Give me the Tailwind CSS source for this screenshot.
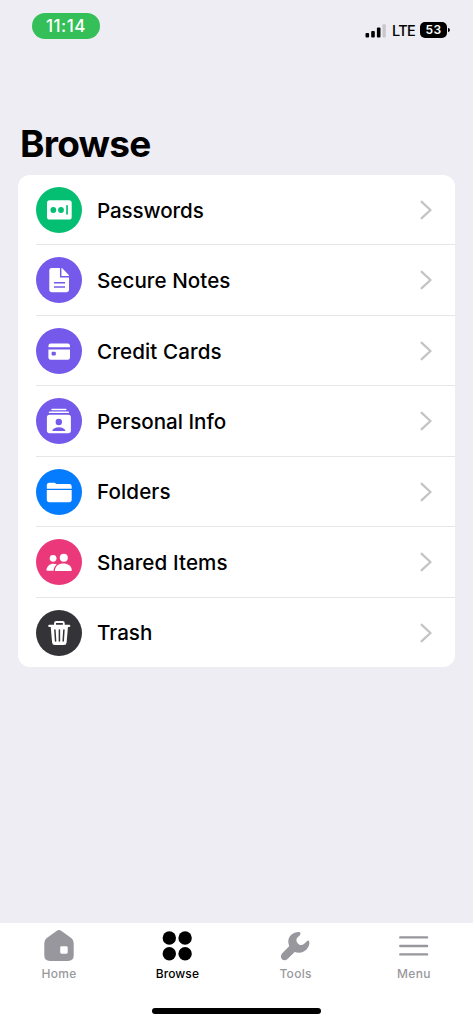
<!DOCTYPE html>
<html lang="en">
<head>
<meta charset="utf-8">
<title>Browse</title>
<script src="https://cdn.jsdelivr.net/npm/@tailwindcss/browser@4"></script>
</head>
<body class="w-[473px] h-[1024px] overflow-hidden bg-[#eeedf4] font-['Inter','Liberation_Sans',sans-serif] text-black flex flex-col">
<header class="h-[60px] shrink-0 flex items-start justify-between pl-8 pr-[22px] pt-[13px]">
  <div class="w-[68px] h-[26px] rounded-full bg-[#34bf58] text-white text-[17px] font-[450] flex items-center justify-center tracking-[0.5px] pt-px">11:14</div>
  <div class="flex items-center h-[18px] mt-2">
    <svg class="w-[21px] h-[15px]" viewBox="0 0 21 15"><rect x="0.5" y="10" width="3.6" height="4.5" rx="1"/><rect x="6.2" y="8" width="3.6" height="6.5" rx="1"/><rect x="11.9" y="4.6" width="3.6" height="9.9" rx="1"/><rect x="17.5" y="1.2" width="3.3" height="13.3" rx="1" fill="#c8c7cd"/></svg>
    <span class="ml-[6px] w-[22px] pt-px text-[14.5px] tracking-[-0.6px] font-medium whitespace-nowrap">LTE</span>
    <span class="ml-[6px] w-[27px] h-[16px] rounded-[5px] bg-black text-white text-[12px] font-semibold tracking-[0.4px] flex items-center justify-center">53</span>
    <svg class="w-[3px] h-[6px] ml-px" viewBox="0 0 3 6"><path d="M0 0.8Q2 1.5 2 3T0 5.2Z"/></svg>
  </div>
</header>
<main class="grow flex flex-col px-[18px]">
  <h1 class="h-[115px] pt-[61px] pl-[2px] text-[37px] leading-[46px] font-bold tracking-[-0.75px]">Browse</h1>
  <ul class="h-[492.4px] bg-white rounded-[12px] pl-[18px] flex flex-col text-[20.6px] font-[450]">
    <li class="flex-1 flex items-center border-b border-[#e6e6e8]">
      <svg class="w-[46px] h-[46px]" viewBox="0 0 46 46"><circle cx="23" cy="23" r="23" fill="#04bf72"/><rect x="11" y="13.2" width="24.7" height="19.4" rx="2.7" fill="#fff"/><g fill="#04bf72"><circle cx="17.3" cy="23" r="2.9"/><circle cx="25" cy="23" r="2.9"/><rect x="30.2" y="18.2" width="1.7" height="9.4"/></g></svg>
      <span class="ml-[15px] pt-[3px] grow tracking-[-0.1px]">Passwords</span>
      <svg class="w-[12px] h-[20px] mr-[23px]" viewBox="0 0 12 20" fill="none" stroke="#c4c4c7" stroke-width="2.3" stroke-linecap="round" stroke-linejoin="round"><path d="M1.7 1.8 10.5 10 1.7 18.2"/></svg>
    </li>
    <li class="flex-1 flex items-center border-b border-[#e6e6e8]">
      <svg class="w-[46px] h-[46px]" viewBox="0 0 46 46"><circle cx="23" cy="23" r="23" fill="#7559ea"/><path d="M15.7 11H26L33 18.3V32.6Q33 35.3 30.3 35.3H15.9Q13.3 35.3 13.3 32.6V13.4Q13.3 11 15.7 11Z" fill="#fff"/><path d="M24.7 10.5V19.7H33.8M18 25.8H29M18 29.9H29" fill="none" stroke="#7559ea" stroke-width="1.5"/></svg>
      <span class="ml-[15px] pt-[2px] grow tracking-[0.05px]">Secure Notes</span>
      <svg class="w-[12px] h-[20px] mr-[23px]" viewBox="0 0 12 20" fill="none" stroke="#c4c4c7" stroke-width="2.3" stroke-linecap="round" stroke-linejoin="round"><path d="M1.7 1.8 10.5 10 1.7 18.2"/></svg>
    </li>
    <li class="flex-1 flex items-center border-b border-[#e6e6e8]">
      <svg class="w-[46px] h-[46px]" viewBox="0 0 46 46"><circle cx="23" cy="23" r="23" fill="#7559ea"/><path d="M12.4 19.3V17.9Q12.4 15.6 14.7 15.6H31.7Q34 15.6 34 17.9V19.3ZM12.4 21.5H34V29.5Q34 31.7 31.7 31.7H14.7Q12.4 31.7 12.4 29.5Z" fill="#fff"/><rect x="15.6" y="23.7" width="4.2" height="3.8" rx="1" fill="#7559ea"/></svg>
      <span class="ml-[15px] pt-[3px] grow tracking-[0.12px]">Credit Cards</span>
      <svg class="w-[12px] h-[20px] mr-[23px]" viewBox="0 0 12 20" fill="none" stroke="#c4c4c7" stroke-width="2.3" stroke-linecap="round" stroke-linejoin="round"><path d="M1.7 1.8 10.5 10 1.7 18.2"/></svg>
    </li>
    <li class="flex-1 flex items-center border-b border-[#e6e6e8]">
      <svg class="w-[46px] h-[46px]" viewBox="0 0 46 46"><circle cx="23" cy="23" r="23" fill="#7559ea"/><path d="M16 11.4H29.8M13.5 14.3H32.3" stroke="#fff" stroke-width="1.5" stroke-linecap="round"/><rect x="10.9" y="16.8" width="24" height="18.4" rx="2.6" fill="#fff"/><circle cx="22.8" cy="24" r="3.2" fill="#7559ea"/><path d="M16.2 33Q17.5 29.3 22.8 29.3T29.5 33Z" fill="#7559ea"/></svg>
      <span class="ml-[15px] pt-[2px] grow">Personal Info</span>
      <svg class="w-[12px] h-[20px] mr-[23px]" viewBox="0 0 12 20" fill="none" stroke="#c4c4c7" stroke-width="2.3" stroke-linecap="round" stroke-linejoin="round"><path d="M1.7 1.8 10.5 10 1.7 18.2"/></svg>
    </li>
    <li class="flex-1 flex items-center border-b border-[#e6e6e8]">
      <svg class="w-[46px] h-[46px]" viewBox="0 0 46 46"><circle cx="23" cy="23" r="23" fill="#057bfe"/><path d="M10.8 19.8V16.2Q10.8 13.7 13.3 13.7H18.6L20.6 15.1H33.2Q35.7 15.1 35.7 17.5V19.8ZM10.8 21.1H35.7V30.6Q35.7 33.2 33.1 33.2H13.4Q10.8 33.2 10.8 30.6Z" fill="#fff"/></svg>
      <span class="ml-[15px] pt-[2px] grow tracking-[0.1px]">Folders</span>
      <svg class="w-[12px] h-[20px] mr-[23px]" viewBox="0 0 12 20" fill="none" stroke="#c4c4c7" stroke-width="2.3" stroke-linecap="round" stroke-linejoin="round"><path d="M1.7 1.8 10.5 10 1.7 18.2"/></svg>
    </li>
    <li class="flex-1 flex items-center border-b border-[#e6e6e8]">
      <svg class="w-[46px] h-[46px]" viewBox="0 0 46 46"><circle cx="23" cy="23" r="23" fill="#eb387b"/><g fill="#fff"><circle cx="17.1" cy="19.3" r="3.4"/><circle cx="27.8" cy="18.7" r="4"/><path d="M18.9 32C19 27 23 24.6 27.4 24.6S35.6 27 35.8 31Q35.8 32 34.8 32ZM17.6 31.7H11.3Q10.3 31.7 10.4 30.8C11 26.8 14.3 24.7 17.4 24.7Q19.2 24.7 20.8 25.5C18.8 27 17.7 29 17.6 31.7Z"/></g></svg>
      <span class="ml-[15px] pt-[3px] grow tracking-[0.1px]">Shared Items</span>
      <svg class="w-[12px] h-[20px] mr-[23px]" viewBox="0 0 12 20" fill="none" stroke="#c4c4c7" stroke-width="2.3" stroke-linecap="round" stroke-linejoin="round"><path d="M1.7 1.8 10.5 10 1.7 18.2"/></svg>
    </li>
    <li class="flex-1 flex items-center">
      <svg class="w-[46px] h-[46px]" viewBox="0 0 46 46"><circle cx="23" cy="23" r="23" fill="#343337"/><path d="M13.3 15.9H33.2" stroke="#fff" stroke-width="2.2" stroke-linecap="round"/><path d="M19 15.5V13.2Q19 12 20.2 12H26.6Q27.8 12 27.8 13.2V15.5" fill="none" stroke="#fff" stroke-width="1.9"/><path d="M14.7 16.5H32L30.6 32.6Q30.4 35.1 27.9 35.1H18.8Q16.3 35.1 16.1 32.6Z" fill="#fff"/><path d="M18.9 20 19.6 31M23.4 20V31M27.9 20 27.2 31" stroke="#343337" stroke-width="1.5" stroke-linecap="round"/></svg>
      <span class="ml-[15px] pt-[2px] grow">Trash</span>
      <svg class="w-[12px] h-[20px] mr-[23px]" viewBox="0 0 12 20" fill="none" stroke="#c4c4c7" stroke-width="2.3" stroke-linecap="round" stroke-linejoin="round"><path d="M1.7 1.8 10.5 10 1.7 18.2"/></svg>
    </li>
  </ul>
</main>
<footer class="h-[101px] shrink-0 bg-white flex flex-col items-center">
  <nav class="w-full h-[85px] grid grid-cols-4 text-[12px] leading-4 tracking-[0.3px] text-[#99999d] font-[450]">
    <div class="flex flex-col items-center pt-[6px]">
      <svg class="w-[32px] h-[34px]" viewBox="0 0 32 34"><path fill="#98979d" fill-rule="evenodd" d="M13.5 2Q16 0.2 18.5 2L28.2 9Q30.7 10.8 30.7 14V26.3Q30.7 32 25 32H7Q1.3 32 1.3 26.3V14Q1.3 10.8 3.8 9ZM18.5 17.2Q17.2 17.2 17.2 18.5V23.3Q17.2 24.7 18.5 24.7H23.4Q24.7 24.7 24.7 23.3V18.5Q24.7 17.2 23.4 17.2Z"/></svg>
      <span class="mt-[3px]">Home</span>
    </div>
    <div class="flex flex-col items-center pt-[6px] text-black font-medium">
      <svg class="w-[32px] h-[34px]" viewBox="0 0 32 34"><circle cx="8.3" cy="9" r="6.7"/><circle cx="24.1" cy="9" r="6.7"/><circle cx="8.3" cy="24.8" r="6.7"/><circle cx="24.1" cy="24.8" r="6.7"/></svg>
      <span class="mt-[3px] tracking-[0.1px]">Browse</span>
    </div>
    <div class="flex flex-col items-center pt-[6px]">
      <svg class="w-[32px] h-[34px]" viewBox="0 0 32 34"><path fill="#98979d" d="M19.5 3.1C14 2.5 8.8 6.4 8.3 11.8Q8.2 14.4 9.2 17.2L2 24.5Q.4 26.2 1.1 28.7Q2.1 31.3 4.3 31.3Q6 31.4 7.5 30L14.7 23C17.8 24.2 21 24 23.8 22.6C28 20.2 30.2 15.5 29.1 12Q28.2 11 27.1 12L24 15Q21.5 16.9 19 15.5L17 13.6Q15.4 11.3 17 8.9L20.1 5.9Q21.2 3.9 19.5 3.1Z"/></svg>
      <span class="mt-[3px]">Tools</span>
    </div>
    <div class="flex flex-col items-center pt-[6px]">
      <svg class="w-[32px] h-[34px]" viewBox="0 0 32 34"><path d="M2.3 8.4H29.1M2.3 17H29.1M2.3 25.4H29.1" stroke="#98979d" stroke-width="2.4" stroke-linecap="round"/></svg>
      <span class="mt-[3px]">Menu</span>
    </div>
  </nav>
  <div class="w-[169px] h-[6px] bg-black rounded-full"></div>
</footer>
</body>
</html>
